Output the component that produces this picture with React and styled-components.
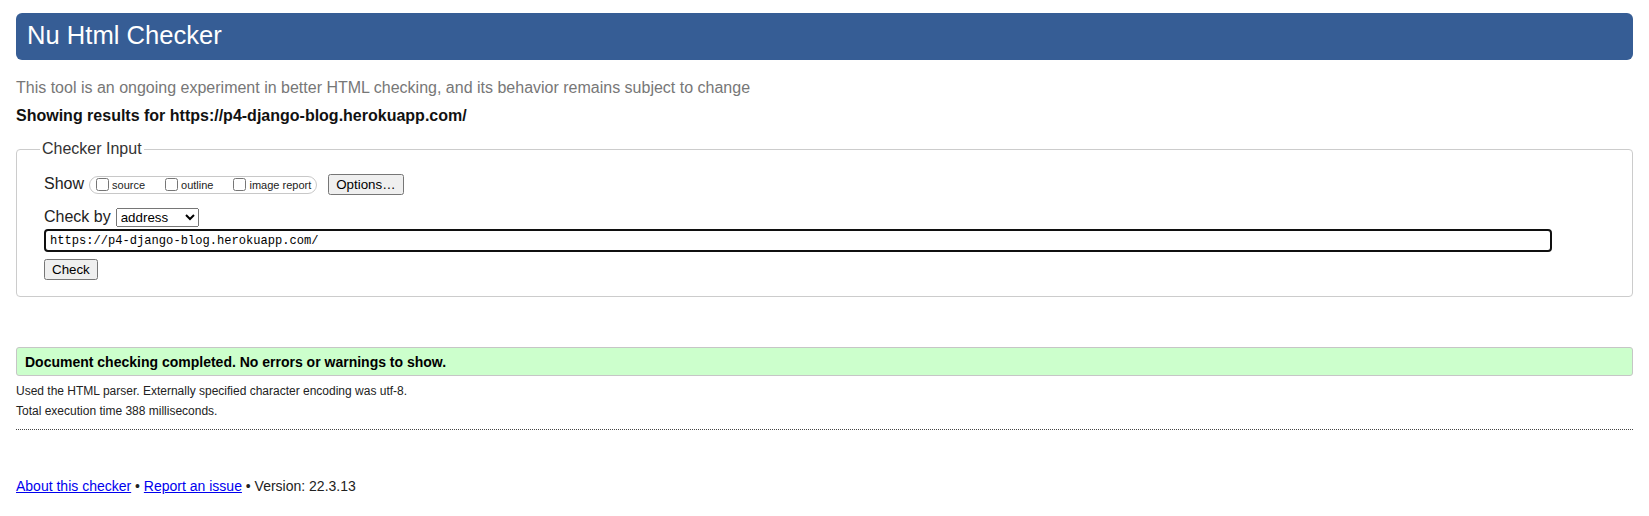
import React from 'react';
import styled, { createGlobalStyle } from 'styled-components';

const GlobalStyle = createGlobalStyle`
  body {
    margin: 0;
    padding: 13px 16px 0 16px;
    background: #fff;
    color: #222;
    font-family: "Liberation Sans", Arial, sans-serif;
  }
`;

const Header = styled.h1`
  margin: 0;
  height: 47px;
  box-sizing: border-box;
  padding: 0 11px;
  background-color: #365d95;
  color: #fff;
  border-radius: 6px;
  font-size: 25.6px;
  font-weight: normal;
  line-height: 45px;
`;

const Intro = styled.p`
  margin: 19px 0 0 0;
  font-size: 16px;
  line-height: 18px;
  color: #777;
`;

const Results = styled.p`
  margin: 10px 0 0 0;
  font-size: 16px;
  line-height: 18px;
  font-weight: bold;
  color: #111;
`;

const Box = styled.fieldset`
  margin: 15px 0 0 0;
  padding: 0 19px 16px 23px;
  border: 1px solid #ccc;
  border-radius: 4px;
  min-width: 0;
`;

const Legend = styled.legend`
  padding: 0 2px;
  font-size: 16px;
  line-height: 18px;
  color: #333;
`;

const Inner = styled.div`
  padding: 16px 0 0 4px;
`;

const Row = styled.div`
  display: flex;
  align-items: center;
  margin-top: ${p => p.gap || 0}px;
`;

const Label = styled.span`
  font-size: 16px;
  line-height: 16px;
  margin: 0 5px 2px 0;
  color: #222;
`;

const Pill = styled.span`
  display: flex;
  align-items: center;
  height: 18px;
  box-sizing: border-box;
  padding: 0 5px 0 6px;
  border: 1px solid #c8c8c8;
  border-radius: 9px;
  margin-right: 11px;
`;

const Choice = styled.label`
  display: flex;
  align-items: center;
  font-size: 11px;
  color: #222;
  & + & {
    margin-left: 20px;
  }
`;

const Tick = styled.input`
  width: 13px;
  height: 13px;
  margin: 0 3px 0 0;
`;

const Button = styled.button`
  font-family: "Liberation Sans", Arial, sans-serif;
  font-size: 13.33px;
  color: #000;
  margin: 0;
`;

const Select = styled.select`
  width: 83px;
  height: 19px;
  font-family: "Liberation Sans", Arial, sans-serif;
  font-size: 13.33px;
  margin: 0;
`;

const UrlInput = styled.input`
  display: block;
  width: 1508px;
  height: 23px;
  box-sizing: border-box;
  margin: 2px 0 0 0;
  padding: 0 4px;
  border: 2px solid #101010;
  border-radius: 4px;
  outline: none;
  font-family: "Liberation Mono", monospace;
  font-size: 12.1px;
  color: #000;
`;

const Notice = styled.p`
  margin: 50px 0 0 0;
  padding: 6px 8px 5px 8px;
  background: #ccffcc;
  border: 1px solid #c6c6c6;
  border-radius: 3px;
  font-size: 14px;
  line-height: 16px;
  font-weight: bold;
  color: #000;
`;

const Detail = styled.p`
  margin: ${p => p.first ? '6px' : '0'} 0 0 0;
  font-size: 12px;
  line-height: 19.5px;
  color: #222;
`;

const Rule = styled.hr`
  margin: 8px 0 0 0;
  border: 0;
  border-top: 1px dotted #444;
  height: 0;
`;

const Footer = styled.p`
  margin: 48px 0 0 0;
  font-size: 14px;
  line-height: 16px;
  color: #222;
  a {
    color: #0000ee;
    text-decoration: underline;
  }
`;

export default function App() {
  return (
    <>
      <GlobalStyle />
      <Header>Nu Html Checker</Header>
      <Intro>This tool is an ongoing experiment in better HTML checking, and its behavior remains subject to change</Intro>
      <Results>Showing results for https://p4-django-blog.herokuapp.com/</Results>

      <Box>
        <Legend>Checker Input</Legend>
        <Inner>
          <Row>
            <Label>Show</Label>
            <Pill>
              <Choice><Tick type="checkbox" />source</Choice>
              <Choice><Tick type="checkbox" />outline</Choice>
              <Choice><Tick type="checkbox" />image report</Choice>
            </Pill>
            <Button type="button">Options…</Button>
          </Row>
          <Row gap={13}>
            <Label>Check by</Label>
            <Select defaultValue="address">
              <option value="address">address</option>
              <option value="file">file upload</option>
              <option value="text">text input</option>
            </Select>
          </Row>
          <UrlInput type="url" defaultValue="https://p4-django-blog.herokuapp.com/" />
          <Row gap={7}>
            <Button type="submit">Check</Button>
          </Row>
        </Inner>
      </Box>

      <Notice>Document checking completed. No errors or warnings to show.</Notice>
      <Detail first>Used the HTML parser. Externally specified character encoding was utf-8.</Detail>
      <Detail>Total execution time 388 milliseconds.</Detail>
      <Rule />

      <Footer>
        <a href="#about">About this checker</a> • <a href="#issue">Report an issue</a> • Version: 22.3.13
      </Footer>
    </>
  );
}
